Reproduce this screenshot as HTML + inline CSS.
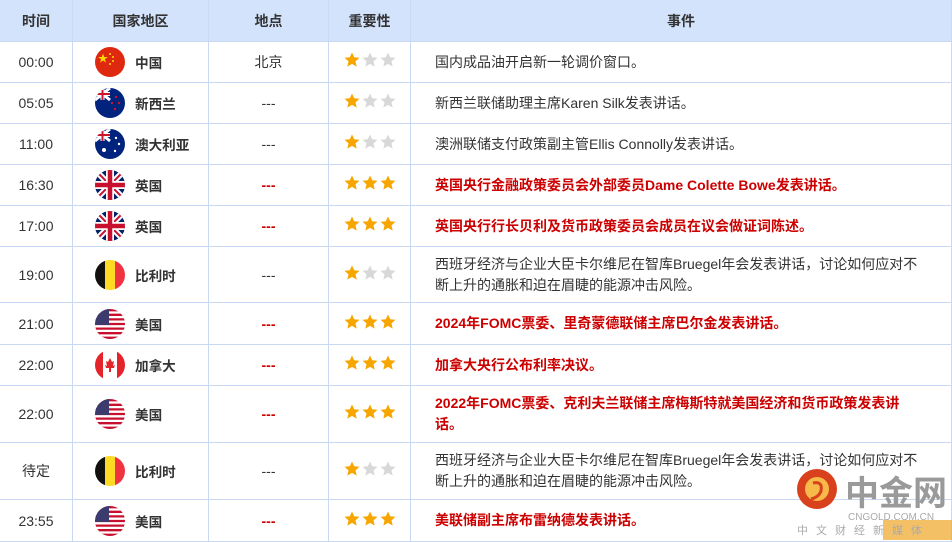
<!DOCTYPE html><html><head><meta charset="utf-8"><style>
body{margin:0;width:952px;height:540px;overflow:hidden;background:#fff;font-family:"Liberation Sans","Noto Sans CJK SC",sans-serif;font-size:14px;color:#333;position:relative}
table{border-collapse:collapse;width:953px;table-layout:fixed;position:absolute;left:-1px;top:-1px}
td,th{border:1px solid #c9d9f3;padding:0;text-align:center;vertical-align:middle}
th{background:#d3e3fc;height:41px;font-weight:bold;font-size:14px;color:#333}
td.t{font-size:14px}
td.c{text-align:left}
.cc{display:flex;align-items:center;padding-left:22px;font-weight:bold;font-size:13.6px}
.cc svg{margin-right:10px;flex:none}
td.e{text-align:left;padding-left:24px;padding-right:20px;line-height:21px}
.r{color:#c00;font-weight:bold}
.dr{color:#c00;font-weight:bold}
.s svg{display:block;margin:-4px 0 0 15px}
.logo{position:absolute;left:795px;top:463px}
</style></head><body>
<svg width="0" height="0" style="position:absolute"><defs>
<path id="st" d="M8 0.5L10.2 5.3L15.5 5.8L11.5 9.4L12.7 14.6L8 11.9L3.3 14.6L4.5 9.4L0.5 5.8L5.8 5.3Z"/>
<g id="s1"><use href="#st" fill="#f7a600" x="0"/><use href="#st" fill="#d8d8d8" x="18"/><use href="#st" fill="#d8d8d8" x="36"/></g>
<g id="s3"><use href="#st" fill="#f7a600" x="0"/><use href="#st" fill="#f7a600" x="18"/><use href="#st" fill="#f7a600" x="36"/></g>
<clipPath id="cp"><circle cx="15" cy="15" r="15"/></clipPath>
<g id="cn"><circle cx="15" cy="15" r="15" fill="#de2910"/><text x="3" y="15" font-size="10" fill="#ffde00">★</text><circle cx="15" cy="7" r="1" fill="#ffde00"/><circle cx="18" cy="10" r="1" fill="#ffde00"/><circle cx="18" cy="14" r="1" fill="#ffde00"/><circle cx="15" cy="17" r="1" fill="#ffde00"/></g>
<g id="nz"><circle cx="15" cy="15" r="15" fill="#00247d"/><g clip-path="url(#cp)"><path d="M0 0L15 12M15 0L0 12" stroke="#fff" stroke-width="3"/><path d="M7.5 0V12M0 6H15" stroke="#fff" stroke-width="4"/><path d="M7.5 0V12M0 6H15" stroke="#cc142b" stroke-width="2"/></g><circle cx="21" cy="9" r="1.2" fill="#cc142b"/><circle cx="24" cy="15" r="1.2" fill="#cc142b"/><circle cx="20" cy="21" r="1.2" fill="#cc142b"/><circle cx="17" cy="15" r="1.2" fill="#cc142b"/></g>
<g id="au"><circle cx="15" cy="15" r="15" fill="#00247d"/><g clip-path="url(#cp)"><path d="M0 0L15 12M15 0L0 12" stroke="#fff" stroke-width="3"/><path d="M7.5 0V12M0 6H15" stroke="#fff" stroke-width="4"/><path d="M7.5 0V12M0 6H15" stroke="#cc142b" stroke-width="2"/></g><circle cx="21" cy="9" r="1.2" fill="#fff"/><circle cx="24" cy="15" r="1.2" fill="#fff"/><circle cx="20" cy="22" r="1.2" fill="#fff"/><circle cx="9" cy="21" r="2" fill="#fff"/></g>
<g id="uk"><circle cx="15" cy="15" r="15" fill="#012169"/><g clip-path="url(#cp)"><path d="M0 0L30 30M30 0L0 30" stroke="#fff" stroke-width="6"/><path d="M0 0L30 30M30 0L0 30" stroke="#c8102e" stroke-width="2"/><path d="M15 0V30M0 15H30" stroke="#fff" stroke-width="8"/><path d="M15 0V30M0 15H30" stroke="#c8102e" stroke-width="4.5"/></g></g>
<g id="be"><g clip-path="url(#cp)"><rect width="10" height="30" fill="#111"/><rect x="10" width="10" height="30" fill="#fdda24"/><rect x="20" width="10" height="30" fill="#ef3340"/></g></g>
<g id="us"><g clip-path="url(#cp)"><rect width="30" height="30" fill="#fff"/><path d="M0 1.2H30M0 5.8H30M0 10.4H30M0 15H30M0 19.6H30M0 24.2H30M0 28.8H30" stroke="#c8102e" stroke-width="2.3"/><rect width="14" height="16" fill="#3c3b6e"/></g></g>
<g id="ca"><g clip-path="url(#cp)"><rect width="30" height="30" fill="#fff"/><rect width="8" height="30" fill="#e4232b"/><rect x="22" width="8" height="30" fill="#e4232b"/><path d="M15 8L17 12L19 11L18 16L20 15L19 18H16V22H14V18H11L10 15L12 16L11 11L13 12Z" fill="#e4232b"/></g></g>
</defs></svg>
<table>
<colgroup><col style="width:73px"><col style="width:136px"><col style="width:120px"><col style="width:82px"><col></colgroup>
<tr><th>时间</th><th>国家地区</th><th>地点</th><th>重要性</th><th>事件</th></tr>
<tr style="height:41px"><td class="t">00:00</td><td class="c"><div class="cc"><svg width="30" height="30"><use href="#cn"/></svg>中国</div></td><td>北京</td><td class="s"><svg width="52" height="16"><use href="#s1"/></svg></td><td class="e">国内成品油开启新一轮调价窗口。</td></tr>
<tr style="height:41px"><td class="t">05:05</td><td class="c"><div class="cc"><svg width="30" height="30"><use href="#nz"/></svg>新西兰</div></td><td>---</td><td class="s"><svg width="52" height="16"><use href="#s1"/></svg></td><td class="e">新西兰联储助理主席Karen Silk发表讲话。</td></tr>
<tr style="height:41px"><td class="t">11:00</td><td class="c"><div class="cc"><svg width="30" height="30"><use href="#au"/></svg>澳大利亚</div></td><td>---</td><td class="s"><svg width="52" height="16"><use href="#s1"/></svg></td><td class="e">澳洲联储支付政策副主管Ellis Connolly发表讲话。</td></tr>
<tr style="height:41px"><td class="t">16:30</td><td class="c"><div class="cc"><svg width="30" height="30"><use href="#uk"/></svg>英国</div></td><td class="dr">---</td><td class="s"><svg width="52" height="16"><use href="#s3"/></svg></td><td class="e r">英国央行金融政策委员会外部委员Dame Colette Bowe发表讲话。</td></tr>
<tr style="height:41px"><td class="t">17:00</td><td class="c"><div class="cc"><svg width="30" height="30"><use href="#uk"/></svg>英国</div></td><td class="dr">---</td><td class="s"><svg width="52" height="16"><use href="#s3"/></svg></td><td class="e r">英国央行行长贝利及货币政策委员会成员在议会做证词陈述。</td></tr>
<tr style="height:56px"><td class="t">19:00</td><td class="c"><div class="cc"><svg width="30" height="30"><use href="#be"/></svg>比利时</div></td><td>---</td><td class="s"><svg width="52" height="16"><use href="#s1"/></svg></td><td class="e">西班牙经济与企业大臣卡尔维尼在智库Bruegel年会发表讲话，讨论如何应对不断上升的通胀和迫在眉睫的能源冲击风险。</td></tr>
<tr style="height:42px"><td class="t">21:00</td><td class="c"><div class="cc"><svg width="30" height="30"><use href="#us"/></svg>美国</div></td><td class="dr">---</td><td class="s"><svg width="52" height="16"><use href="#s3"/></svg></td><td class="e r">2024年FOMC票委、里奇蒙德联储主席巴尔金发表讲话。</td></tr>
<tr style="height:41px"><td class="t">22:00</td><td class="c"><div class="cc"><svg width="30" height="30"><use href="#ca"/></svg>加拿大</div></td><td class="dr">---</td><td class="s"><svg width="52" height="16"><use href="#s3"/></svg></td><td class="e r">加拿大央行公布利率决议。</td></tr>
<tr style="height:57px"><td class="t">22:00</td><td class="c"><div class="cc"><svg width="30" height="30"><use href="#us"/></svg>美国</div></td><td class="dr">---</td><td class="s"><svg width="52" height="16"><use href="#s3"/></svg></td><td class="e r">2022年FOMC票委、克利夫兰联储主席梅斯特就美国经济和货币政策发表讲<br>话。</td></tr>
<tr style="height:57px"><td class="t">待定</td><td class="c"><div class="cc"><svg width="30" height="30"><use href="#be"/></svg>比利时</div></td><td>---</td><td class="s"><svg width="52" height="16"><use href="#s1"/></svg></td><td class="e">西班牙经济与企业大臣卡尔维尼在智库Bruegel年会发表讲话，讨论如何应对不断上升的通胀和迫在眉睫的能源冲击风险。</td></tr>
<tr style="height:42px"><td class="t">23:55</td><td class="c"><div class="cc"><svg width="30" height="30"><use href="#us"/></svg>美国</div></td><td class="dr">---</td><td class="s"><svg width="52" height="16"><use href="#s3"/></svg></td><td class="e r">美联储副主席布雷纳德发表讲话。</td></tr>
</table>
<div class="logo">
<svg width="157" height="77" style="position:absolute;left:0;top:0">
<rect x="88" y="57" width="69" height="20" fill="#f0b040" opacity="0.8"/>
<circle cx="22" cy="26" r="20" fill="#d8411b"/><circle cx="22" cy="26" r="12" fill="#f6b94a"/><path d="M18 20Q28 18 26 28Q24 34 16 36" stroke="#d8411b" stroke-width="3" fill="none"/>
<text x="50" y="42" font-size="34" font-weight="bold" fill="#9a9a9a" font-family="Noto Sans CJK SC,sans-serif">中金网</text>
<text x="53" y="57" font-size="10" fill="#aaa" font-family="Liberation Sans,sans-serif">CNGOLD.COM.CN</text>
<text x="2" y="71" font-size="11" fill="#aaa" letter-spacing="8" font-family="Noto Sans CJK SC,sans-serif">中文财经新媒体</text>
</svg></div>
</body></html>
